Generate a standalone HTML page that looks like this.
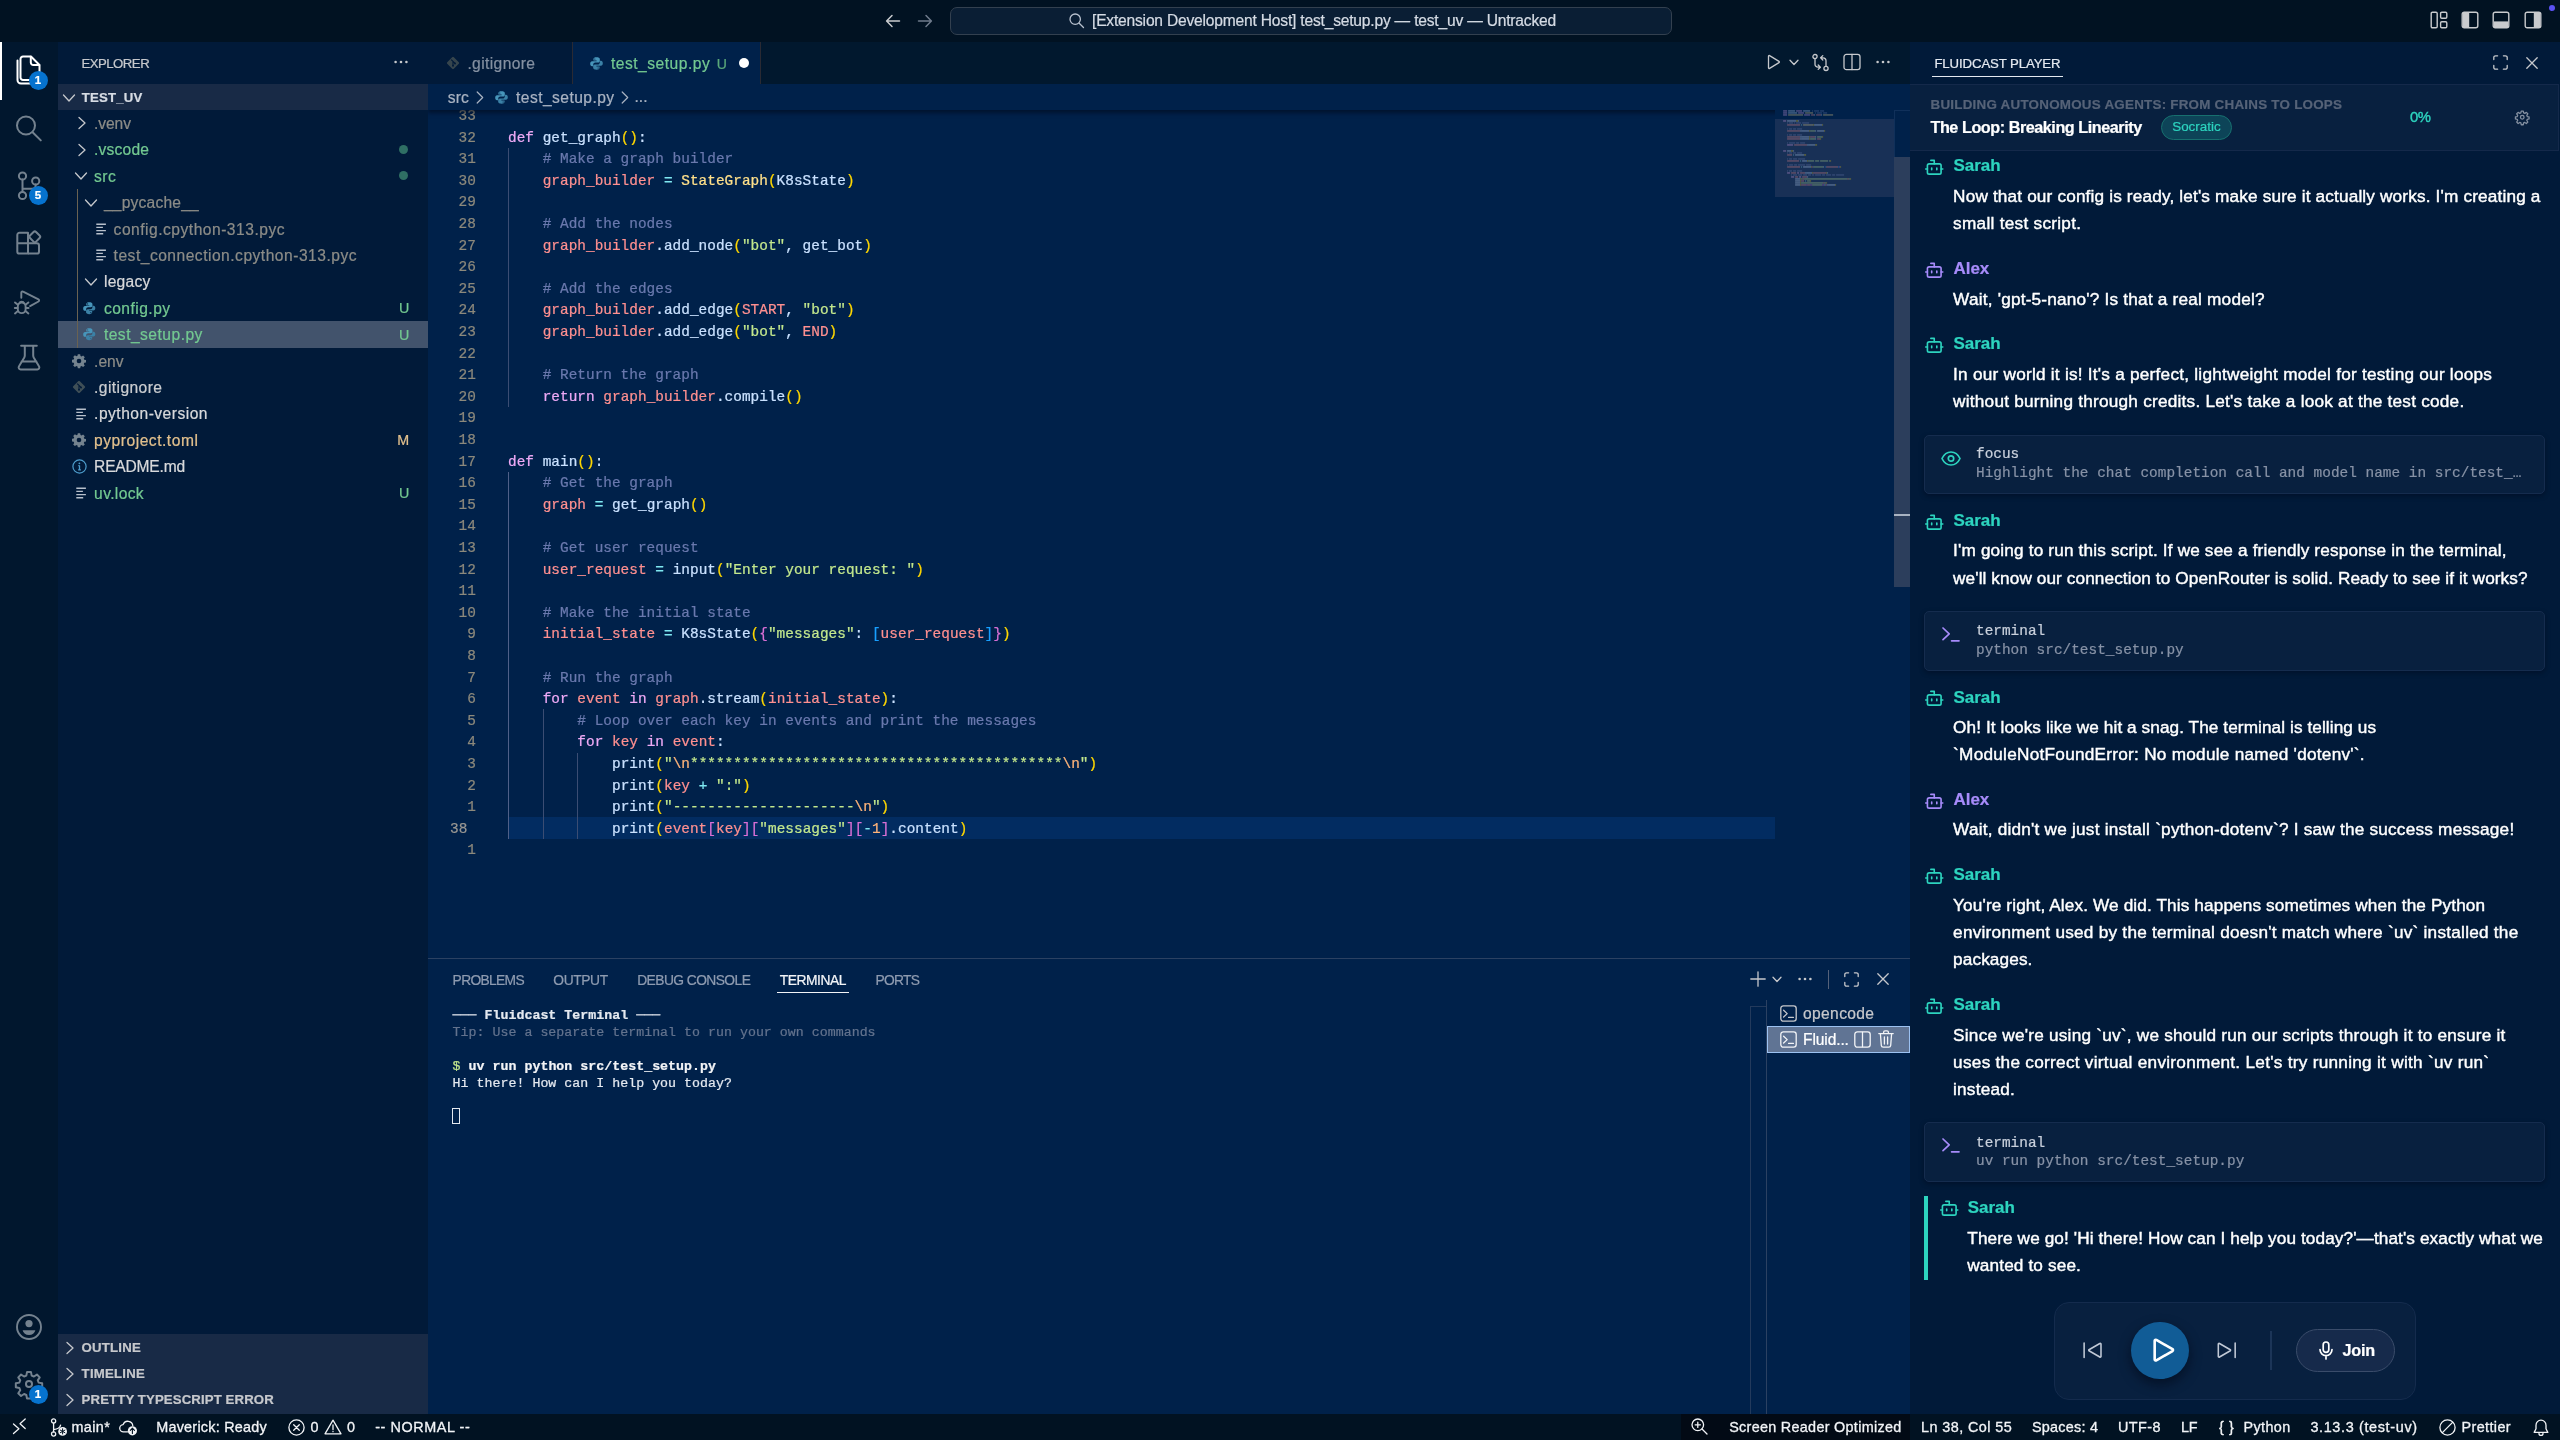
<!DOCTYPE html>
<html lang="en"><head><meta charset="utf-8"><title>test_setup.py — test_uv</title>
<style>
*{box-sizing:border-box;margin:0;padding:0}
html,body{width:2560px;height:1440px;overflow:hidden;background:#00214a}
body{font-family:"Liberation Sans",sans-serif;font-size:15.6px;color:#ccd3de;position:relative;-webkit-font-smoothing:antialiased}
.abs{position:absolute}
#titlebar,#activity,#sidebar,#editor,#panel,#aux,#status{will-change:transform}
body{-webkit-text-stroke:.22px}
#status .t{-webkit-text-stroke:.3px}
svg{display:block;overflow:visible}
.t{position:absolute;white-space:pre;line-height:1}
/* regions */
#titlebar{position:absolute;left:0;top:0;width:2560px;height:42px;background:#011222}
#activity{position:absolute;left:0;top:42px;width:58px;height:1372px;background:#01172e}
#sidebar{position:absolute;left:58px;top:42px;width:370px;height:1372px;background:#011a39}
#editor{position:absolute;left:428px;top:42px;width:1482px;height:916px;background:#00214a;overflow:hidden}
#panel{position:absolute;left:428px;top:958px;width:1482px;height:456px;background:#00214a;border-top:1px solid #2b4162;overflow:hidden}
#aux{position:absolute;left:1910px;top:42px;width:650px;height:1372px;background:#011a39;overflow:hidden}
#status{position:absolute;left:0;top:1414px;width:2560px;height:26px;background:#011222;color:#f2f4f7}
.badge{width:19px;height:19px;border-radius:50%;background:#0673cf;color:#fff;font-size:11.5px;font-weight:bold;text-align:center;line-height:19px}
.ln{font-size:14.4px;color:#8c897c;letter-spacing:.027px}
.cl{font-size:14.4px;color:#c9e1ff;letter-spacing:.027px}
.m{font-size:17.2px;color:#ffffff;-webkit-text-stroke:.42px}
.mono{font-family:"Liberation Mono",monospace}
</style></head><body>

<!-- ================= TITLE BAR ================= -->
<div id="titlebar">
  <svg class="abs" style="left:884px;top:12px" width="18" height="18" viewBox="0 0 18 18" fill="none" stroke="#c9cbce" stroke-width="1.5" stroke-linecap="round" stroke-linejoin="round"><path d="M15.5 9H3M8 3.5L2.6 9 8 14.5"></path></svg>
  <svg class="abs" style="left:916px;top:12px" width="18" height="18" viewBox="0 0 18 18" fill="none" stroke="#6f7b8c" stroke-width="1.5" stroke-linecap="round" stroke-linejoin="round"><path d="M2.5 9H15M10 3.5L15.4 9 10 14.5"></path></svg>
  <div class="abs" style="left:950px;top:7px;width:722px;height:28px;border:1px solid #33404f;border-radius:7px;background:#0a1e34"></div>
  <svg class="abs" style="left:1068px;top:12px" width="17" height="17" viewBox="0 0 17 17" fill="none" stroke="#b9c2cf" stroke-width="1.3" stroke-linecap="round"><circle cx="7.2" cy="7.2" r="5.2"></circle><path d="M11.2 11.2L15.5 15.5"></path></svg>
  <span class="t" style="left: 1092px; top: 13px; font-size: 15.6px; color: rgb(213, 219, 228); letter-spacing: -0.199px;">[Extension Development Host] test_setup.py — test_uv — Untracked</span>
  <!-- layout controls -->
  <svg class="abs" style="left:2429.500px;top:11.400px" width="18" height="18" viewBox="0 0 18 18" fill="none" stroke="#c9cbce" stroke-width="1.4"><rect x="1.2" y="1.2" width="6" height="15.6" rx="1.2"></rect><rect x="10.6" y="1.2" width="6.2" height="6" rx="1.2"></rect><rect x="10.6" y="10.8" width="6.2" height="6" rx="1.2"></rect></svg>
  <svg class="abs" style="left:2460.600px;top:11.400px" width="18" height="18" viewBox="0 0 18 18"><rect x="1.2" y="1.2" width="15.6" height="15.6" rx="2" fill="none" stroke="#c9cbce" stroke-width="1.4"></rect><path d="M2 2h6.2v14H2z" fill="#c9cbce"></path></svg>
  <svg class="abs" style="left:2492.300px;top:11.400px" width="18" height="18" viewBox="0 0 18 18"><rect x="1.2" y="1.2" width="15.6" height="15.6" rx="2" fill="none" stroke="#c9cbce" stroke-width="1.4"></rect><path d="M2 10.4h14V16H2z" fill="#c9cbce"></path></svg>
  <svg class="abs" style="left:2523.500px;top:11.400px" width="18" height="18" viewBox="0 0 18 18"><rect x="1.2" y="1.2" width="15.6" height="15.6" rx="2" fill="none" stroke="#c9cbce" stroke-width="1.4"></rect><path d="M9.8 2H16v14H9.8z" fill="#c9cbce"></path></svg>
  <div class="abs" style="left:2548.800px;top:4.900px;width:6.500px;height:6.500px;border-radius:50%;background:#5b52f2"></div>
</div>

<!-- ================= ACTIVITY BAR ================= -->
<div id="activity">
  <div class="abs" style="left:0;top:0;width:2px;height:58px;background:#ffffff"></div>
    <!-- files (active) -->
  <svg class="abs" style="left:15px;top:12px" width="27" height="32" viewBox="0 0 27 32" fill="none" stroke="#ffffff" stroke-width="2" stroke-linejoin="round" stroke-linecap="round"><path d="M8 2.500h8l8.500 8.500v12.500a2.500 2.500 0 0 1-2.500 2.500H8a2.500 2.500 0 0 1-2.500-2.500V5a2.500 2.500 0 0 1 2.500-2.500z"></path><path d="M15.800 2.800v5.700a2.500 2.500 0 0 0 2.500 2.500h5.900"></path><path d="M2.500 6.500v19.500a3.500 3.500 0 0 0 3.500 3.500h9.500"></path></svg>
  <div class="abs badge" style="left:28.5px;top:28.5px">1</div>
  <!-- search -->
  <svg class="abs" style="left:15px;top:72px" width="28" height="28" viewBox="0 0 28 28" fill="none" stroke="#74828f" stroke-width="2" stroke-linecap="round"><circle cx="11" cy="11.5" r="9"></circle><path d="M17.6 18.2l8.2 8.2"></path></svg>
  <!-- scm -->
  <svg class="abs" style="left:15px;top:128px" width="28" height="32" viewBox="0 0 28 32" fill="none" stroke="#74828f" stroke-width="2" stroke-linecap="round"><circle cx="7.5" cy="6" r="3.6"></circle><circle cx="7.5" cy="25.5" r="3.6"></circle><circle cx="20.7" cy="11" r="3.6"></circle><path d="M7.500 9.600v12.300M20.700 14.600v.600a3.500 3.500 0 0 1-3.500 3.500H7.500"></path></svg>
  <div class="abs badge" style="left:28.5px;top:144px">5</div>
  <!-- extensions -->
  <svg class="abs" style="left:15px;top:186px" width="28" height="30" viewBox="0 0 28 30" fill="none" stroke="#74828f" stroke-width="2" stroke-linejoin="round"><path d="M4.500 4.700H13v20.900H4.500a2.200 2.200 0 0 1-2.200-2.200V6.900a2.200 2.200 0 0 1 2.200-2.200z"></path><path d="M2.300 15.200h19.500a2.200 2.200 0 0 1 2.200 2.200v6a2.200 2.200 0 0 1-2.200 2.200H13"></path><rect x="15.500" y="4.500" width="8.600" height="8.600" rx="1.800" transform="rotate(45 19.800 8.800)"></rect></svg>
  <!-- run &amp; debug -->
  <svg class="abs" style="left:12px;top:246px" width="30" height="30" viewBox="0 0 30 30" fill="none" stroke="#74828f" stroke-width="1.900" stroke-linejoin="round" stroke-linecap="round"><path d="M9.300 9.800V4.600a1.200 1.200 0 0 1 1.800-1l15.400 7.800a1.200 1.200 0 0 1 0 2.100l-8.400 4.600"></path><path d="M5.800 18.400a3.900 3.900 0 0 1 7.800 0v2.800a3.900 3.900 0 0 1-7.800 0z"></path><path d="M7.400 15.300a2.400 2.400 0 0 1 4.600 0M5.600 16.600l-2.600-2.200M13.800 16.600l2.600-2.200M5.600 20H2.800M16.600 20h-2.800M5.900 23l-2.900 2.400M13.500 23l2.900 2.400"></path></svg>
  <!-- testing (flask) -->
  <svg class="abs" style="left:17px;top:302px" width="24" height="28" viewBox="0 0 24 28" fill="none" stroke="#74828f" stroke-width="2" stroke-linejoin="round" stroke-linecap="round"><path d="M4.100 1.800h15.700M7.800 2v9.500c0 1-.300 1.700-.800 2.600L2 22.300a2 2 0 0 0 1.800 3.100h16.400a2 2 0 0 0 1.800-3.100l-5-8.200c-.500-.900-.800-1.600-.800-2.600V2M4.600 17.500h14.800"></path></svg>
  <!-- account -->
  <svg class="abs" style="left:15px;top:1271px" width="28" height="28" viewBox="0 0 28 28" fill="none" stroke="#74828f" stroke-width="1.9"><circle cx="14" cy="14" r="12"></circle><circle cx="14" cy="10.6" r="3.6" fill="#74828f" stroke="none"></circle><path d="M7.6 17.2a6.6 6.2 0 0 0 12.8 0z" fill="#74828f" stroke="none"></path></svg>
  <!-- settings gear -->
  <svg class="abs" style="left:15px;top:1328px" width="28" height="28" viewBox="0 0 24 24" fill="none" stroke="#74828f" stroke-width="1.7" stroke-linejoin="round"><path d="M10.3 1.8h3.4l.6 3 1.9.8 2.6-1.7 2.4 2.4-1.7 2.6.8 1.9 3 .6v3.4l-3 .6-.8 1.9 1.7 2.6-2.4 2.4-2.6-1.7-1.9.8-.6 3h-3.4l-.6-3-1.9-.8-2.6 1.7-2.4-2.4 1.7-2.6-.8-1.9-3-.6v-3.4l3-.6.8-1.9-1.7-2.6 2.4-2.4 2.6 1.7 1.9-.8z"></path><circle cx="12" cy="12" r="2.6"></circle></svg>
  <div class="abs badge" style="left:28.5px;top:1343px">1</div>

</div>

<!-- ================= SIDEBAR ================= -->
<div id="sidebar">
<!--SIDEBAR-->
<span class="t" style="left: 23.4px; top: 15px; font-size: 13.2px; color: rgb(198, 200, 204); letter-spacing: -0.504px;">EXPLORER</span>
<svg class="abs" style="left:336.0px;top:18px" width="14" height="4" viewBox="0 0 14 4" fill="#c6c8cc"><circle cx="1.600" cy="2" r="1.300"></circle><circle cx="7" cy="2" r="1.300"></circle><circle cx="12.400" cy="2" r="1.300"></circle></svg>
<div class="abs" style="left:0;top:42px;width:370px;height:26px;background:#182a46"></div>
<svg class="abs" style="left:4.299999999999997px;top:50.5px" width="14" height="10" viewBox="0 0 14 10" fill="none" stroke="#c6c8cc" stroke-width="1.3" stroke-linecap="round" stroke-linejoin="round"><path d="M1.5 2l5.5 6 5.5-6"></path></svg>
<span class="t" style="left: 23.7px; top: 48.5px; font-size: 13.2px; font-weight: bold; color: rgb(215, 220, 228); letter-spacing: 0.206px;">TEST_UV</span>
<svg class="abs" style="left:19px;top:74.4px" width="10" height="14" viewBox="0 0 10 14" fill="none" stroke="#c6c8cc" stroke-width="1.3" stroke-linecap="round" stroke-linejoin="round"><path d="M2 1.5l6 5.5-6 5.5"></path></svg>
<span class="t" style="left: 36.1px; top: 73.9px; font-size: 15.6px; color: rgb(140, 140, 135); letter-spacing: -0.096px;">.venv</span>
<svg class="abs" style="left:19px;top:100.8px" width="10" height="14" viewBox="0 0 10 14" fill="none" stroke="#c6c8cc" stroke-width="1.3" stroke-linecap="round" stroke-linejoin="round"><path d="M2 1.5l6 5.5-6 5.5"></path></svg>
<span class="t" style="left: 36.1px; top: 100.3px; font-size: 15.6px; color: rgb(115, 201, 145); letter-spacing: 0.193px;">.vscode</span>
<div class="abs" style="left:341.0px;top:102.5px;width:9px;height:9px;border-radius:50%;background:#2f6f64"></div>
<svg class="abs" style="left:16px;top:129.2px" width="14" height="10" viewBox="0 0 14 10" fill="none" stroke="#c6c8cc" stroke-width="1.3" stroke-linecap="round" stroke-linejoin="round"><path d="M1.5 2l5.5 6 5.5-6"></path></svg>
<span class="t" style="left: 36.1px; top: 126.7px; font-size: 15.6px; color: rgb(115, 201, 145); letter-spacing: 0.434px;">src</span>
<div class="abs" style="left:341.0px;top:128.9px;width:9px;height:9px;border-radius:50%;background:#2f6f64"></div>
<svg class="abs" style="left:25.5px;top:155.6px" width="14" height="10" viewBox="0 0 14 10" fill="none" stroke="#c6c8cc" stroke-width="1.3" stroke-linecap="round" stroke-linejoin="round"><path d="M1.5 2l5.5 6 5.5-6"></path></svg>
<span class="t" style="left: 45.9px; top: 153.1px; font-size: 15.6px; color: rgb(140, 140, 135); letter-spacing: 0.211px;">__pycache__</span>
<svg class="abs" style="left:37.5px;top:181.0px" width="12" height="12" viewBox="0 0 12 12" fill="none" stroke="#b8c0cc" stroke-width="1.4"><path d="M0.300 1.200h9.600M0.300 4.400h6.600M0.300 7.600h9.600M0.300 10.800h6.900"></path></svg>
<span class="t" style="left: 55.6px; top: 179.5px; font-size: 15.6px; color: rgb(140, 140, 135); letter-spacing: 0.501px;">config.cpython-313.pyc</span>
<svg class="abs" style="left:37.5px;top:207.4px" width="12" height="12" viewBox="0 0 12 12" fill="none" stroke="#b8c0cc" stroke-width="1.4"><path d="M0.300 1.200h9.600M0.300 4.400h6.600M0.300 7.600h9.600M0.300 10.800h6.900"></path></svg>
<span class="t" style="left: 55.6px; top: 205.9px; font-size: 15.6px; color: rgb(140, 140, 135); letter-spacing: 0.497px;">test_connection.cpython-313.pyc</span>
<svg class="abs" style="left:25.5px;top:234.8px" width="14" height="10" viewBox="0 0 14 10" fill="none" stroke="#c6c8cc" stroke-width="1.3" stroke-linecap="round" stroke-linejoin="round"><path d="M1.5 2l5.5 6 5.5-6"></path></svg>
<span class="t" style="left: 45.9px; top: 232.3px; font-size: 15.6px; color: rgb(216, 217, 219); letter-spacing: 0.287px;">legacy</span>
<svg class="abs" style="left:24.5px;top:259.9px" width="12.500" height="12.500" viewBox="0 0 14 14"><path d="M6.9.4C4.9.4 3.7 1 3.7 2.4v1.5h3.4v.6H2.3C.9 4.5.2 5.6.2 7.2s.7 2.7 2 2.7h1.3V8.1c0-1.2 1-2.2 2.3-2.2h3c1 0 1.8-.8 1.8-1.9V2.4C10.600 1.100 9.200 .400 6.900 .400zM5.200 1.500a.600 .600 0 1 1 0 1.300.600 .600 0 0 1 0-1.300z" fill="#4795ba"></path><path d="M7.100 13.600c2 0 3.200-.600 3.200-2V10.100H6.900v-.6h4.800c1.400 0 2.100-1.100 2.100-2.700s-.7-2.700-2-2.700h-1.300v1.800c0 1.200-1 2.200-2.300 2.200h-3c-1 0-1.800.8-1.800 1.900v1.600c0 1.300 1.400 2 3.700 2zm1.700-1.100a.600 .600 0 1 1 0-1.300.600 .600 0 0 1 0 1.300z" fill="#3b81a6"></path></svg>
<span class="t" style="left: 45.9px; top: 258.7px; font-size: 15.6px; color: rgb(115, 201, 145); letter-spacing: 0.475px;">config.py</span>
<span class="t" style="left:341.0px;top:259.3px;font-size:14.300px;color:#73c991">U</span>
<div class="abs" style="left:0;top:279.4px;width:370px;height:26.400px;background:#42536c"></div>
<svg class="abs" style="left:24.5px;top:286.3px" width="12.500" height="12.500" viewBox="0 0 14 14"><path d="M6.9.4C4.9.4 3.7 1 3.7 2.4v1.5h3.4v.6H2.3C.9 4.5.2 5.6.2 7.2s.7 2.7 2 2.7h1.3V8.1c0-1.2 1-2.2 2.3-2.2h3c1 0 1.8-.8 1.8-1.9V2.4C10.600 1.100 9.200 .400 6.900 .400zM5.200 1.500a.600 .600 0 1 1 0 1.300.600 .600 0 0 1 0-1.300z" fill="#4795ba"></path><path d="M7.100 13.600c2 0 3.200-.600 3.200-2V10.100H6.900v-.6h4.800c1.400 0 2.100-1.100 2.100-2.700s-.7-2.700-2-2.700h-1.300v1.800c0 1.200-1 2.200-2.300 2.200h-3c-1 0-1.800.8-1.800 1.900v1.600c0 1.300 1.400 2 3.700 2zm1.700-1.100a.600 .600 0 1 1 0-1.300.600 .600 0 0 1 0 1.300z" fill="#3b81a6"></path></svg>
<span class="t" style="left: 45.9px; top: 285.1px; font-size: 15.6px; color: rgb(115, 201, 145); letter-spacing: 0.48px;">test_setup.py</span>
<span class="t" style="left:341.0px;top:285.7px;font-size:14.300px;color:#73c991">U</span>
<svg class="abs" style="left:14.4px;top:312.0px" width="14" height="14" viewBox="0 0 14 14"><path d="M5.800 .300h2.400l.3 1.700 1.100.5 1.500-1 1.700 1.700-1 1.500.5 1.100 1.700.3v2.400l-1.700.3-.5 1.100 1 1.500-1.700 1.700-1.500-1-1.100.5-.3 1.700H5.800l-.3-1.700-1.100-.5-1.500 1-1.700-1.700 1-1.500-.5-1.100-1.700-.3V5.800l1.700-.3.5-1.100-1-1.500 1.700-1.700 1.500 1 1.100-.5z" fill="#74838f"></path><circle cx="7" cy="7" r="2.300" fill="#011a39"></circle></svg>
<span class="t" style="left: 36.1px; top: 311.5px; font-size: 15.6px; color: rgb(140, 140, 135); letter-spacing: -0.046px;">.env</span>
<svg class="abs" style="left:14.4px;top:338.4px" width="14" height="14" viewBox="0 0 14 14"><rect x="2.300" y="2.300" width="9.400" height="9.400" rx="1.200" transform="rotate(45 7 7)" fill="#3f4f57"></rect><path d="M5.200 3.600l3.600 3.600M7 5.400v4.400" stroke="#011a39" stroke-width="1.100" fill="none"></path><circle cx="7" cy="9.800" r="1" fill="#011a39"></circle><circle cx="9" cy="7.400" r="1" fill="#011a39"></circle></svg>
<span class="t" style="left: 36.1px; top: 337.9px; font-size: 15.6px; color: rgb(203, 205, 208); letter-spacing: 0.414px;">.gitignore</span>
<svg class="abs" style="left:18px;top:365.8px" width="12" height="12" viewBox="0 0 12 12" fill="none" stroke="#b8c0cc" stroke-width="1.4"><path d="M0.300 1.200h9.600M0.300 4.400h6.600M0.300 7.600h9.600M0.300 10.800h6.900"></path></svg>
<span class="t" style="left: 36.1px; top: 364.3px; font-size: 15.6px; color: rgb(216, 217, 219); letter-spacing: 0.485px;">.python-version</span>
<svg class="abs" style="left:14.4px;top:391.2px" width="14" height="14" viewBox="0 0 14 14"><path d="M5.800 .300h2.400l.3 1.700 1.100.5 1.500-1 1.700 1.700-1 1.500.5 1.100 1.700.3v2.400l-1.700.3-.5 1.100 1 1.500-1.700 1.700-1.500-1-1.100.5-.3 1.700H5.800l-.3-1.700-1.100-.5-1.500 1-1.700-1.700 1-1.500-.5-1.100-1.700-.3V5.800l1.700-.3.5-1.100-1-1.500 1.700-1.700 1.500 1 1.100-.5z" fill="#74838f"></path><circle cx="7" cy="7" r="2.300" fill="#011a39"></circle></svg>
<span class="t" style="left: 36.1px; top: 390.7px; font-size: 15.6px; color: rgb(226, 192, 141); letter-spacing: 0.516px;">pyproject.toml</span>
<span class="t" style="left:339.2px;top:391.3px;font-size:14.300px;color:#e2c08d">M</span>
<svg class="abs" style="left:13.5px;top:417.1px" width="15" height="15" viewBox="0 0 15 15" fill="none" stroke="#4d9ccb" stroke-width="1.200"><circle cx="7.500" cy="7.500" r="6.600"></circle><path d="M7.500 6.600v4.200M6.300 6.600h1.200M6.100 10.900h2.800" stroke-width="1.300"></path><circle cx="7.400" cy="4.300" r=".9" fill="#4d9ccb" stroke="none"></circle></svg>
<span class="t" style="left: 36.1px; top: 417.1px; font-size: 15.6px; color: rgb(216, 217, 219); letter-spacing: -0.213px;">README.md</span>
<svg class="abs" style="left:18px;top:445.0px" width="12" height="12" viewBox="0 0 12 12" fill="none" stroke="#b8c0cc" stroke-width="1.4"><path d="M0.300 1.200h9.600M0.300 4.400h6.600M0.300 7.600h9.600M0.300 10.800h6.900"></path></svg>
<span class="t" style="left: 36.1px; top: 443.5px; font-size: 15.6px; color: rgb(115, 201, 145); letter-spacing: 0.361px;">uv.lock</span>
<span class="t" style="left:341.0px;top:444.1px;font-size:14.300px;color:#73c991">U</span>
<div class="abs" style="left:18.6px;top:147.4px;width:1px;height:158.4px;background:#6a6252"></div>
<div class="abs" style="left:0;top:1292px;width:370px;height:80px;background:#182a46"></div>
<svg class="abs" style="left:7px;top:1298.5px" width="10" height="14" viewBox="0 0 10 14" fill="none" stroke="#c6c8cc" stroke-width="1.3" stroke-linecap="round" stroke-linejoin="round"><path d="M2 1.5l6 5.5-6 5.5"></path></svg>
<span class="t" style="left: 23.6px; top: 1298.7px; font-size: 13.2px; font-weight: bold; color: rgb(198, 200, 204); letter-spacing: 0.216px;">OUTLINE</span>
<svg class="abs" style="left:7px;top:1325px" width="10" height="14" viewBox="0 0 10 14" fill="none" stroke="#c6c8cc" stroke-width="1.3" stroke-linecap="round" stroke-linejoin="round"><path d="M2 1.5l6 5.5-6 5.5"></path></svg>
<span class="t" style="left: 23.6px; top: 1325.2px; font-size: 13.2px; font-weight: bold; color: rgb(198, 200, 204); letter-spacing: 0.232px;">TIMELINE</span>
<svg class="abs" style="left:7px;top:1351px" width="10" height="14" viewBox="0 0 10 14" fill="none" stroke="#c6c8cc" stroke-width="1.3" stroke-linecap="round" stroke-linejoin="round"><path d="M2 1.5l6 5.5-6 5.5"></path></svg>
<span class="t" style="left: 23.6px; top: 1351.2px; font-size: 13.2px; font-weight: bold; color: rgb(198, 200, 204); letter-spacing: 0.115px;">PRETTY TYPESCRIPT ERROR</span>
</div>

<!-- ================= EDITOR ================= -->
<div id="editor">
<!--EDITOR-->
<div class="abs" style="left:0;top:0;width:1482px;height:42px;background:#01182e"></div>
<div class="abs" style="left:0;top:0;width:144px;height:42px;background:#011a39"></div>
<div class="abs" style="left:144px;top:0;width:189px;height:42px;background:#00214a;border-left:1px solid #2a2a33;border-right:1px solid #2a2a33"></div>
<svg class="abs" style="left:17.500px;top:14px" width="14" height="14" viewBox="0 0 14 14"><rect x="2.300" y="2.300" width="9.400" height="9.400" rx="1.200" transform="rotate(45 7 7)" fill="#36454d"></rect><path d="M5.200 3.600l3.600 3.600M7 5.400v4.400" stroke="#011a39" stroke-width="1.100" fill="none"></path><circle cx="7" cy="9.800" r="1" fill="#011a39"></circle><circle cx="9" cy="7.400" r="1" fill="#011a39"></circle></svg>
<span class="t" style="left: 39.4px; top: 13.7px; font-size: 15.6px; color: rgb(132, 144, 161); letter-spacing: 0.384px;">.gitignore</span>
<svg class="abs" style="left:162px;top:14.5px" width="13" height="13" viewBox="0 0 14 14"><path d="M6.9.4C4.9.4 3.7 1 3.7 2.4v1.500h3.400v.600H2.300C.900 4.500.200 5.600.200 7.200s.700 2.700 2 2.700h1.300V8.100c0-1.200 1-2.200 2.300-2.200h3c1 0 1.800-.800 1.800-1.900V2.400C10.600 1.100 9.200.400 6.900.400zM5.200 1.500a.6.6 0 1 1 0 1.300.6.6 0 0 1 0-1.300z" fill="#4795ba"></path><path d="M7.100 13.600c2 0 3.200-.600 3.200-2V10.100H6.900v-.600h4.800c1.400 0 2.100-1.100 2.100-2.700s-.700-2.700-2-2.700h-1.300v1.800c0 1.200-1 2.200-2.300 2.200h-3c-1 0-1.800.800-1.800 1.900v1.600c0 1.300 1.400 2 3.700 2zm1.700-1.100a.6.6 0 1 1 0-1.300.6.6 0 0 1 0 1.300z" fill="#3b81a6"></path></svg>
<span class="t" style="left: 182.9px; top: 13.7px; font-size: 15.6px; color: rgb(115, 201, 145); letter-spacing: 0.51px;">test_setup.py</span>
<span class="t" style="left:288.700px;top:14.700px;font-size:14px;color:#5aa97a">U</span>
<div class="abs" style="left:310.700px;top:16px;width:10px;height:10px;border-radius:50%;background:#ffffff"></div>
<svg class="abs" style="left:1338px;top:11.800px" width="16" height="16" viewBox="0 0 16 16" stroke="#c6c8cc" fill="none" stroke-width="1.300" stroke-linecap="round" stroke-linejoin="round"><path d="M2.500 2.200v11.600a.700.700 0 0 0 1.100.600l9.400-5.800a.700.700 0 0 0 0-1.200L3.600 1.600a.700.700 0 0 0-1.100.600z"></path></svg>
<svg class="abs" style="left:1360.500px;top:16.800px" width="10" height="7" viewBox="0 0 10 7" stroke="#c6c8cc" fill="none" stroke-width="1.300" stroke-linecap="round" stroke-linejoin="round"><path d="M1 1.200l4 4.300 4-4.300"></path></svg>
<svg class="abs" style="left:1383px;top:10.800px" width="19" height="19" viewBox="0 0 19 19" stroke="#c6c8cc" fill="none" stroke-width="1.300" stroke-linecap="round" stroke-linejoin="round"><circle cx="4" cy="3.600" r="2.100"></circle><circle cx="15" cy="15.400" r="2.100"></circle><path d="M4 5.700v5.500a3 3 0 0 0 3 3h2.200M7.200 12l2.200 2.200-2.200 2.200M15 13.300V7.800a3 3 0 0 0-3-3H9.800M11.800 7l-2.200-2.200 2.200-2.200"></path></svg>
<svg class="abs" style="left:1415px;top:11.300px" width="18" height="18" viewBox="0 0 18 18" stroke="#c6c8cc" fill="none" stroke-width="1.300" stroke-linecap="round" stroke-linejoin="round"><rect x="1" y="1.400" width="16" height="15.200" rx="2.400"></rect><path d="M9 1.400v15.200"></path></svg>
<svg class="abs" style="left:1447.500px;top:18.400px" width="14" height="4" viewBox="0 0 14 4" fill="#c6c8cc"><circle cx="1.600" cy="2" r="1.300"></circle><circle cx="7" cy="2" r="1.300"></circle><circle cx="12.400" cy="2" r="1.300"></circle></svg>
<div class="abs" id="code" style="left:0;top:68px;width:1482px;height:848px;overflow:hidden">
<div class="abs" style="left:80px;top:707.4px;width:1267px;height:22px;background:#022c61"></div>
<div class="abs" style="left:80.0px;top:37.8px;width:1px;height:259.2px;background:#3b4d73"></div>
<div class="abs" style="left:80.0px;top:361.8px;width:1px;height:367.2px;background:#4f6088"></div>
<div class="abs" style="left:115.0px;top:599.4px;width:1px;height:129.6px;background:#3b4d73"></div>
<div class="abs" style="left:149.0px;top:642.6px;width:1px;height:86.4px;background:#3b4d73"></div>
<span class="t mono ln" style="right:1434.2px;top:-1.0px">33</span>
<span class="t mono ln" style="right:1434.2px;top:20.6px">32</span>
<span class="t mono cl" style="left:80px;top:20.6px"><span style="color:#eeaaf6">def</span> <span style="color:#c9e1ff">get_graph</span><span style="color:#ffd700">()</span>:</span>
<span class="t mono ln" style="right:1434.2px;top:42.2px">31</span>
<span class="t mono cl" style="left:80px;top:42.2px">    <span style="color:#6a79ae"># Make a graph builder</span></span>
<span class="t mono ln" style="right:1434.2px;top:63.8px">30</span>
<span class="t mono cl" style="left:80px;top:63.8px">    <span style="color:#ff9090">graph_builder</span> <span style="color:#7fe8f2">=</span> <span style="color:#ffe08a">StateGraph</span><span style="color:#ffd700">(</span><span style="color:#c9e1ff">K8sState</span><span style="color:#ffd700">)</span></span>
<span class="t mono ln" style="right:1434.2px;top:85.4px">29</span>
<span class="t mono ln" style="right:1434.2px;top:107.0px">28</span>
<span class="t mono cl" style="left:80px;top:107.0px">    <span style="color:#6a79ae"># Add the nodes</span></span>
<span class="t mono ln" style="right:1434.2px;top:128.6px">27</span>
<span class="t mono cl" style="left:80px;top:128.6px">    <span style="color:#ff9090">graph_builder</span>.<span style="color:#c9e1ff">add_node</span><span style="color:#ffd700">(</span><span style="color:#c3e88d">"bot"</span>, <span style="color:#c9e1ff">get_bot</span><span style="color:#ffd700">)</span></span>
<span class="t mono ln" style="right:1434.2px;top:150.2px">26</span>
<span class="t mono ln" style="right:1434.2px;top:171.8px">25</span>
<span class="t mono cl" style="left:80px;top:171.8px">    <span style="color:#6a79ae"># Add the edges</span></span>
<span class="t mono ln" style="right:1434.2px;top:193.4px">24</span>
<span class="t mono cl" style="left:80px;top:193.4px">    <span style="color:#ff9090">graph_builder</span>.<span style="color:#c9e1ff">add_edge</span><span style="color:#ffd700">(</span><span style="color:#ff9090">START</span>, <span style="color:#c3e88d">"bot"</span><span style="color:#ffd700">)</span></span>
<span class="t mono ln" style="right:1434.2px;top:215.0px">23</span>
<span class="t mono cl" style="left:80px;top:215.0px">    <span style="color:#ff9090">graph_builder</span>.<span style="color:#c9e1ff">add_edge</span><span style="color:#ffd700">(</span><span style="color:#c3e88d">"bot"</span>, <span style="color:#ff9090">END</span><span style="color:#ffd700">)</span></span>
<span class="t mono ln" style="right:1434.2px;top:236.6px">22</span>
<span class="t mono ln" style="right:1434.2px;top:258.2px">21</span>
<span class="t mono cl" style="left:80px;top:258.2px">    <span style="color:#6a79ae"># Return the graph</span></span>
<span class="t mono ln" style="right:1434.2px;top:279.8px">20</span>
<span class="t mono cl" style="left:80px;top:279.8px">    <span style="color:#eeaaf6">return</span> <span style="color:#ff9090">graph_builder</span>.<span style="color:#c9e1ff">compile</span><span style="color:#ffd700">()</span></span>
<span class="t mono ln" style="right:1434.2px;top:301.4px">19</span>
<span class="t mono ln" style="right:1434.2px;top:323.0px">18</span>
<span class="t mono ln" style="right:1434.2px;top:344.6px">17</span>
<span class="t mono cl" style="left:80px;top:344.6px"><span style="color:#eeaaf6">def</span> <span style="color:#c9e1ff">main</span><span style="color:#ffd700">()</span>:</span>
<span class="t mono ln" style="right:1434.2px;top:366.2px">16</span>
<span class="t mono cl" style="left:80px;top:366.2px">    <span style="color:#6a79ae"># Get the graph</span></span>
<span class="t mono ln" style="right:1434.2px;top:387.8px">15</span>
<span class="t mono cl" style="left:80px;top:387.8px">    <span style="color:#ff9090">graph</span> <span style="color:#7fe8f2">=</span> <span style="color:#c9e1ff">get_graph</span><span style="color:#ffd700">()</span></span>
<span class="t mono ln" style="right:1434.2px;top:409.4px">14</span>
<span class="t mono ln" style="right:1434.2px;top:431.0px">13</span>
<span class="t mono cl" style="left:80px;top:431.0px">    <span style="color:#6a79ae"># Get user request</span></span>
<span class="t mono ln" style="right:1434.2px;top:452.6px">12</span>
<span class="t mono cl" style="left:80px;top:452.6px">    <span style="color:#ff9090">user_request</span> <span style="color:#7fe8f2">=</span> <span style="color:#c9e1ff">input</span><span style="color:#ffd700">(</span><span style="color:#c3e88d">"Enter your request: "</span><span style="color:#ffd700">)</span></span>
<span class="t mono ln" style="right:1434.2px;top:474.2px">11</span>
<span class="t mono ln" style="right:1434.2px;top:495.8px">10</span>
<span class="t mono cl" style="left:80px;top:495.8px">    <span style="color:#6a79ae"># Make the initial state</span></span>
<span class="t mono ln" style="right:1434.2px;top:517.4px">9</span>
<span class="t mono cl" style="left:80px;top:517.4px">    <span style="color:#ff9090">initial_state</span> <span style="color:#7fe8f2">=</span> <span style="color:#c9e1ff">K8sState</span><span style="color:#ffd700">(</span><span style="color:#da70d6">{</span><span style="color:#c3e88d">"messages"</span>: <span style="color:#179fff">[</span><span style="color:#ff9090">user_request</span><span style="color:#179fff">]</span><span style="color:#da70d6">}</span><span style="color:#ffd700">)</span></span>
<span class="t mono ln" style="right:1434.2px;top:539.0px">8</span>
<span class="t mono ln" style="right:1434.2px;top:560.6px">7</span>
<span class="t mono cl" style="left:80px;top:560.6px">    <span style="color:#6a79ae"># Run the graph</span></span>
<span class="t mono ln" style="right:1434.2px;top:582.2px">6</span>
<span class="t mono cl" style="left:80px;top:582.2px">    <span style="color:#eeaaf6">for</span> <span style="color:#ff9090">event</span> <span style="color:#eeaaf6">in</span> <span style="color:#ff9090">graph</span>.<span style="color:#c9e1ff">stream</span><span style="color:#ffd700">(</span><span style="color:#ff9090">initial_state</span><span style="color:#ffd700">)</span>:</span>
<span class="t mono ln" style="right:1434.2px;top:603.8px">5</span>
<span class="t mono cl" style="left:80px;top:603.8px">        <span style="color:#6a79ae"># Loop over each key in events and print the messages</span></span>
<span class="t mono ln" style="right:1434.2px;top:625.4px">4</span>
<span class="t mono cl" style="left:80px;top:625.4px">        <span style="color:#eeaaf6">for</span> <span style="color:#ff9090">key</span> <span style="color:#eeaaf6">in</span> <span style="color:#ff9090">event</span>:</span>
<span class="t mono ln" style="right:1434.2px;top:647.0px">3</span>
<span class="t mono cl" style="left:80px;top:647.0px">            <span style="color:#c9e1ff">print</span><span style="color:#ffd700">(</span><span style="color:#c3e88d">"</span><span style="color:#ffb47a">\n</span><span style="color:#c3e88d">*******************************************</span><span style="color:#ffb47a">\n</span><span style="color:#c3e88d">"</span><span style="color:#ffd700">)</span></span>
<span class="t mono ln" style="right:1434.2px;top:668.6px">2</span>
<span class="t mono cl" style="left:80px;top:668.6px">            <span style="color:#c9e1ff">print</span><span style="color:#ffd700">(</span><span style="color:#ff9090">key</span> <span style="color:#7fe8f2">+</span> <span style="color:#c3e88d">":"</span><span style="color:#ffd700">)</span></span>
<span class="t mono ln" style="right:1434.2px;top:690.2px">1</span>
<span class="t mono cl" style="left:80px;top:690.2px">            <span style="color:#c9e1ff">print</span><span style="color:#ffd700">(</span><span style="color:#c3e88d">"---------------------</span><span style="color:#ffb47a">\n</span><span style="color:#c3e88d">"</span><span style="color:#ffd700">)</span></span>
<span class="t mono ln" style="left:22px;top:711.8px;color:#9a9893">38</span>
<span class="t mono cl" style="left:80px;top:711.8px">            <span style="color:#c9e1ff">print</span><span style="color:#ffd700">(</span><span style="color:#ff9090">event</span><span style="color:#da70d6">[</span><span style="color:#ff9090">key</span><span style="color:#da70d6">]</span><span style="color:#da70d6">[</span><span style="color:#c3e88d">"messages"</span><span style="color:#da70d6">]</span><span style="color:#da70d6">[</span><span style="color:#7fe8f2">-</span><span style="color:#ffb47a">1</span><span style="color:#da70d6">]</span>.<span style="color:#c9e1ff">content</span><span style="color:#ffd700">)</span></span>
<span class="t mono ln" style="right:1434.2px;top:733.4px">1</span>
</div>
<div class="abs" style="left:0;top:42px;width:1482px;height:26px;background:#00214a;box-shadow:0 3px 4px rgba(0,8,24,.55);clip-path:inset(0 135px -10px 0)"></div>
<span class="t" style="left: 19.7px; top: 47.5px; font-size: 15.6px; color: rgb(169, 179, 194); letter-spacing: 0.168px;">src</span>
<svg class="abs" style="left:48.0px;top:49px" width="8" height="13" viewBox="0 0 8 13" fill="none" stroke="#a9b3c2" stroke-width="1.200" stroke-linecap="round" stroke-linejoin="round"><path d="M1.200 1l5.500 5.500-5.500 5.500"></path></svg>
<svg class="abs" style="left:67px;top:48.5px" width="13" height="13" viewBox="0 0 14 14"><path d="M6.9.4C4.9.4 3.7 1 3.7 2.4v1.500h3.400v.600H2.300C.900 4.500.200 5.600.200 7.200s.700 2.700 2 2.700h1.300V8.100c0-1.200 1-2.200 2.300-2.200h3c1 0 1.800-.800 1.800-1.900V2.400C10.600 1.100 9.200.400 6.900.400zM5.200 1.500a.6.6 0 1 1 0 1.300.6.6 0 0 1 0-1.300z" fill="#4795ba"></path><path d="M7.100 13.600c2 0 3.200-.600 3.200-2V10.100H6.900v-.600h4.800c1.400 0 2.100-1.100 2.100-2.700s-.700-2.700-2-2.700h-1.300v1.800c0 1.200-1 2.200-2.300 2.200h-3c-1 0-1.800.800-1.800 1.900v1.600c0 1.300 1.400 2 3.700 2zm1.700-1.100a.6.6 0 1 1 0-1.300.6.6 0 0 1 0 1.300z" fill="#3b81a6"></path></svg>
<span class="t" style="left: 88px; top: 47.5px; font-size: 15.6px; color: rgb(169, 179, 194); letter-spacing: 0.449px;">test_setup.py</span>
<svg class="abs" style="left:193.0px;top:49px" width="8" height="13" viewBox="0 0 8 13" fill="none" stroke="#a9b3c2" stroke-width="1.200" stroke-linecap="round" stroke-linejoin="round"><path d="M1.200 1l5.500 5.500-5.500 5.500"></path></svg>
<span class="t" style="left:206.500px;top:46.500px;font-size:15.600px;color:#a9b3c2">...</span>
<div class="abs" style="left:1347px;top:77px;width:119px;height:78px;background:#183056"></div>
<svg class="abs" style="left:0;top:0;opacity:.36" width="1482" height="200"><rect x="1355.1" y="68.3" width="4.0" height="1.3" fill="#eeaaf6"></rect><rect x="1360.1" y="68.3" width="7.0" height="1.3" fill="#c9e1ff"></rect><rect x="1368.1" y="68.3" width="6.0" height="1.3" fill="#eeaaf6"></rect><rect x="1375.1" y="68.3" width="7.0" height="1.3" fill="#c9e1ff"></rect><rect x="1384.1" y="68.3" width="1.0" height="1.3" fill="#6a79ae"></rect><rect x="1386.1" y="68.3" width="5.0" height="1.3" fill="#6a79ae"></rect><rect x="1392.1" y="68.3" width="4.0" height="1.3" fill="#6a79ae"></rect><rect x="1355.1" y="70.3" width="4.0" height="1.3" fill="#eeaaf6"></rect><rect x="1360.1" y="70.3" width="9.0" height="1.3" fill="#c9e1ff"></rect><rect x="1370.1" y="70.3" width="6.0" height="1.3" fill="#eeaaf6"></rect><rect x="1377.1" y="70.3" width="8.0" height="1.3" fill="#ffe08a"></rect><rect x="1387.1" y="70.3" width="1.0" height="1.3" fill="#6a79ae"></rect><rect x="1389.1" y="70.3" width="5.0" height="1.3" fill="#6a79ae"></rect><rect x="1395.1" y="70.3" width="4.0" height="1.3" fill="#6a79ae"></rect><rect x="1355.1" y="72.3" width="4.0" height="1.3" fill="#eeaaf6"></rect><rect x="1360.1" y="72.3" width="15.0" height="1.3" fill="#ffe08a"></rect><rect x="1376.1" y="72.3" width="6.0" height="1.3" fill="#eeaaf6"></rect><rect x="1383.1" y="72.3" width="3.0" height="1.3" fill="#ff9090"></rect><rect x="1386.1" y="72.3" width="1.0" height="1.3" fill="#c9e1ff"></rect><rect x="1388.1" y="72.3" width="5.0" height="1.3" fill="#ff9090"></rect><rect x="1393.1" y="72.3" width="1.0" height="1.3" fill="#c9e1ff"></rect><rect x="1395.1" y="72.3" width="10.0" height="1.3" fill="#ffe08a"></rect><rect x="1355.1" y="78.3" width="3.0" height="1.3" fill="#eeaaf6"></rect><rect x="1359.1" y="78.3" width="9.0" height="1.3" fill="#c9e1ff"></rect><rect x="1368.1" y="78.3" width="2.0" height="1.3" fill="#ffd700"></rect><rect x="1370.1" y="78.3" width="1.0" height="1.3" fill="#c9e1ff"></rect><rect x="1359.1" y="80.3" width="1.0" height="1.3" fill="#6a79ae"></rect><rect x="1361.1" y="80.3" width="4.0" height="1.3" fill="#6a79ae"></rect><rect x="1366.1" y="80.3" width="1.0" height="1.3" fill="#6a79ae"></rect><rect x="1368.1" y="80.3" width="5.0" height="1.3" fill="#6a79ae"></rect><rect x="1374.1" y="80.3" width="7.0" height="1.3" fill="#6a79ae"></rect><rect x="1359.1" y="82.3" width="13.0" height="1.3" fill="#ff9090"></rect><rect x="1373.1" y="82.3" width="1.0" height="1.3" fill="#7fe8f2"></rect><rect x="1375.1" y="82.3" width="10.0" height="1.3" fill="#ffe08a"></rect><rect x="1385.1" y="82.3" width="1.0" height="1.3" fill="#ffd700"></rect><rect x="1386.1" y="82.3" width="8.0" height="1.3" fill="#c9e1ff"></rect><rect x="1394.1" y="82.3" width="1.0" height="1.3" fill="#ffd700"></rect><rect x="1359.1" y="86.3" width="1.0" height="1.3" fill="#6a79ae"></rect><rect x="1361.1" y="86.3" width="3.0" height="1.3" fill="#6a79ae"></rect><rect x="1365.1" y="86.3" width="3.0" height="1.3" fill="#6a79ae"></rect><rect x="1369.1" y="86.3" width="5.0" height="1.3" fill="#6a79ae"></rect><rect x="1359.1" y="88.3" width="13.0" height="1.3" fill="#ff9090"></rect><rect x="1372.1" y="88.3" width="1.0" height="1.3" fill="#c9e1ff"></rect><rect x="1373.1" y="88.3" width="8.0" height="1.3" fill="#c9e1ff"></rect><rect x="1381.1" y="88.3" width="1.0" height="1.3" fill="#ffd700"></rect><rect x="1382.1" y="88.3" width="5.0" height="1.3" fill="#c3e88d"></rect><rect x="1387.1" y="88.3" width="1.0" height="1.3" fill="#c9e1ff"></rect><rect x="1389.1" y="88.3" width="7.0" height="1.3" fill="#c9e1ff"></rect><rect x="1396.1" y="88.3" width="1.0" height="1.3" fill="#ffd700"></rect><rect x="1359.1" y="92.3" width="1.0" height="1.3" fill="#6a79ae"></rect><rect x="1361.1" y="92.3" width="3.0" height="1.3" fill="#6a79ae"></rect><rect x="1365.1" y="92.3" width="3.0" height="1.3" fill="#6a79ae"></rect><rect x="1369.1" y="92.3" width="5.0" height="1.3" fill="#6a79ae"></rect><rect x="1359.1" y="94.3" width="13.0" height="1.3" fill="#ff9090"></rect><rect x="1372.1" y="94.3" width="1.0" height="1.3" fill="#c9e1ff"></rect><rect x="1373.1" y="94.3" width="8.0" height="1.3" fill="#c9e1ff"></rect><rect x="1381.1" y="94.3" width="1.0" height="1.3" fill="#ffd700"></rect><rect x="1382.1" y="94.3" width="5.0" height="1.3" fill="#ff9090"></rect><rect x="1387.1" y="94.3" width="1.0" height="1.3" fill="#c9e1ff"></rect><rect x="1389.1" y="94.3" width="5.0" height="1.3" fill="#c3e88d"></rect><rect x="1394.1" y="94.3" width="1.0" height="1.3" fill="#ffd700"></rect><rect x="1359.1" y="96.3" width="13.0" height="1.3" fill="#ff9090"></rect><rect x="1372.1" y="96.3" width="1.0" height="1.3" fill="#c9e1ff"></rect><rect x="1373.1" y="96.3" width="8.0" height="1.3" fill="#c9e1ff"></rect><rect x="1381.1" y="96.3" width="1.0" height="1.3" fill="#ffd700"></rect><rect x="1382.1" y="96.3" width="5.0" height="1.3" fill="#c3e88d"></rect><rect x="1387.1" y="96.3" width="1.0" height="1.3" fill="#c9e1ff"></rect><rect x="1389.1" y="96.3" width="3.0" height="1.3" fill="#ff9090"></rect><rect x="1392.1" y="96.3" width="1.0" height="1.3" fill="#ffd700"></rect><rect x="1359.1" y="100.3" width="1.0" height="1.3" fill="#6a79ae"></rect><rect x="1361.1" y="100.3" width="6.0" height="1.3" fill="#6a79ae"></rect><rect x="1368.1" y="100.3" width="3.0" height="1.3" fill="#6a79ae"></rect><rect x="1372.1" y="100.3" width="5.0" height="1.3" fill="#6a79ae"></rect><rect x="1359.1" y="102.3" width="6.0" height="1.3" fill="#eeaaf6"></rect><rect x="1366.1" y="102.3" width="13.0" height="1.3" fill="#ff9090"></rect><rect x="1379.1" y="102.3" width="1.0" height="1.3" fill="#c9e1ff"></rect><rect x="1380.1" y="102.3" width="7.0" height="1.3" fill="#c9e1ff"></rect><rect x="1387.1" y="102.3" width="2.0" height="1.3" fill="#ffd700"></rect><rect x="1355.1" y="108.3" width="3.0" height="1.3" fill="#eeaaf6"></rect><rect x="1359.1" y="108.3" width="4.0" height="1.3" fill="#c9e1ff"></rect><rect x="1363.1" y="108.3" width="2.0" height="1.3" fill="#ffd700"></rect><rect x="1365.1" y="108.3" width="1.0" height="1.3" fill="#c9e1ff"></rect><rect x="1359.1" y="110.3" width="1.0" height="1.3" fill="#6a79ae"></rect><rect x="1361.1" y="110.3" width="3.0" height="1.3" fill="#6a79ae"></rect><rect x="1365.1" y="110.3" width="3.0" height="1.3" fill="#6a79ae"></rect><rect x="1369.1" y="110.3" width="5.0" height="1.3" fill="#6a79ae"></rect><rect x="1359.1" y="112.3" width="5.0" height="1.3" fill="#ff9090"></rect><rect x="1365.1" y="112.3" width="1.0" height="1.3" fill="#7fe8f2"></rect><rect x="1367.1" y="112.3" width="9.0" height="1.3" fill="#c9e1ff"></rect><rect x="1376.1" y="112.3" width="2.0" height="1.3" fill="#ffd700"></rect><rect x="1359.1" y="116.3" width="1.0" height="1.3" fill="#6a79ae"></rect><rect x="1361.1" y="116.3" width="3.0" height="1.3" fill="#6a79ae"></rect><rect x="1365.1" y="116.3" width="4.0" height="1.3" fill="#6a79ae"></rect><rect x="1370.1" y="116.3" width="7.0" height="1.3" fill="#6a79ae"></rect><rect x="1359.1" y="118.3" width="12.0" height="1.3" fill="#ff9090"></rect><rect x="1372.1" y="118.3" width="1.0" height="1.3" fill="#7fe8f2"></rect><rect x="1374.1" y="118.3" width="5.0" height="1.3" fill="#c9e1ff"></rect><rect x="1379.1" y="118.3" width="1.0" height="1.3" fill="#ffd700"></rect><rect x="1380.1" y="118.3" width="6.0" height="1.3" fill="#c3e88d"></rect><rect x="1387.1" y="118.3" width="4.0" height="1.3" fill="#c3e88d"></rect><rect x="1392.1" y="118.3" width="8.0" height="1.3" fill="#c3e88d"></rect><rect x="1401.1" y="118.3" width="1.0" height="1.3" fill="#c3e88d"></rect><rect x="1402.1" y="118.3" width="1.0" height="1.3" fill="#ffd700"></rect><rect x="1359.1" y="122.3" width="1.0" height="1.3" fill="#6a79ae"></rect><rect x="1361.1" y="122.3" width="4.0" height="1.3" fill="#6a79ae"></rect><rect x="1366.1" y="122.3" width="3.0" height="1.3" fill="#6a79ae"></rect><rect x="1370.1" y="122.3" width="7.0" height="1.3" fill="#6a79ae"></rect><rect x="1378.1" y="122.3" width="5.0" height="1.3" fill="#6a79ae"></rect><rect x="1359.1" y="124.3" width="13.0" height="1.3" fill="#ff9090"></rect><rect x="1373.1" y="124.3" width="1.0" height="1.3" fill="#7fe8f2"></rect><rect x="1375.1" y="124.3" width="8.0" height="1.3" fill="#c9e1ff"></rect><rect x="1383.1" y="124.3" width="1.0" height="1.3" fill="#ffd700"></rect><rect x="1384.1" y="124.3" width="1.0" height="1.3" fill="#da70d6"></rect><rect x="1385.1" y="124.3" width="10.0" height="1.3" fill="#c3e88d"></rect><rect x="1395.1" y="124.3" width="1.0" height="1.3" fill="#c9e1ff"></rect><rect x="1397.1" y="124.3" width="1.0" height="1.3" fill="#179fff"></rect><rect x="1398.1" y="124.3" width="12.0" height="1.3" fill="#ff9090"></rect><rect x="1410.1" y="124.3" width="1.0" height="1.3" fill="#179fff"></rect><rect x="1411.1" y="124.3" width="1.0" height="1.3" fill="#da70d6"></rect><rect x="1412.1" y="124.3" width="1.0" height="1.3" fill="#ffd700"></rect><rect x="1359.1" y="128.3" width="1.0" height="1.3" fill="#6a79ae"></rect><rect x="1361.1" y="128.3" width="3.0" height="1.3" fill="#6a79ae"></rect><rect x="1365.1" y="128.3" width="3.0" height="1.3" fill="#6a79ae"></rect><rect x="1369.1" y="128.3" width="5.0" height="1.3" fill="#6a79ae"></rect><rect x="1359.1" y="130.3" width="3.0" height="1.3" fill="#eeaaf6"></rect><rect x="1363.1" y="130.3" width="5.0" height="1.3" fill="#ff9090"></rect><rect x="1369.1" y="130.3" width="2.0" height="1.3" fill="#eeaaf6"></rect><rect x="1372.1" y="130.3" width="5.0" height="1.3" fill="#ff9090"></rect><rect x="1377.1" y="130.3" width="1.0" height="1.3" fill="#c9e1ff"></rect><rect x="1378.1" y="130.3" width="6.0" height="1.3" fill="#c9e1ff"></rect><rect x="1384.1" y="130.3" width="1.0" height="1.3" fill="#ffd700"></rect><rect x="1385.1" y="130.3" width="13.0" height="1.3" fill="#ff9090"></rect><rect x="1398.1" y="130.3" width="1.0" height="1.3" fill="#ffd700"></rect><rect x="1399.1" y="130.3" width="1.0" height="1.3" fill="#c9e1ff"></rect><rect x="1363.1" y="132.3" width="1.0" height="1.3" fill="#6a79ae"></rect><rect x="1365.1" y="132.3" width="4.0" height="1.3" fill="#6a79ae"></rect><rect x="1370.1" y="132.3" width="4.0" height="1.3" fill="#6a79ae"></rect><rect x="1375.1" y="132.3" width="4.0" height="1.3" fill="#6a79ae"></rect><rect x="1380.1" y="132.3" width="3.0" height="1.3" fill="#6a79ae"></rect><rect x="1384.1" y="132.3" width="2.0" height="1.3" fill="#6a79ae"></rect><rect x="1387.1" y="132.3" width="6.0" height="1.3" fill="#6a79ae"></rect><rect x="1394.1" y="132.3" width="3.0" height="1.3" fill="#6a79ae"></rect><rect x="1398.1" y="132.3" width="5.0" height="1.3" fill="#6a79ae"></rect><rect x="1404.1" y="132.3" width="3.0" height="1.3" fill="#6a79ae"></rect><rect x="1408.1" y="132.3" width="8.0" height="1.3" fill="#6a79ae"></rect><rect x="1363.1" y="134.3" width="3.0" height="1.3" fill="#eeaaf6"></rect><rect x="1367.1" y="134.3" width="3.0" height="1.3" fill="#ff9090"></rect><rect x="1371.1" y="134.3" width="2.0" height="1.3" fill="#eeaaf6"></rect><rect x="1374.1" y="134.3" width="5.0" height="1.3" fill="#ff9090"></rect><rect x="1379.1" y="134.3" width="1.0" height="1.3" fill="#c9e1ff"></rect><rect x="1367.1" y="136.3" width="5.0" height="1.3" fill="#c9e1ff"></rect><rect x="1372.1" y="136.3" width="1.0" height="1.3" fill="#ffd700"></rect><rect x="1373.1" y="136.3" width="1.0" height="1.3" fill="#c3e88d"></rect><rect x="1374.1" y="136.3" width="2.0" height="1.3" fill="#ffb47a"></rect><rect x="1376.1" y="136.3" width="43.0" height="1.3" fill="#c3e88d"></rect><rect x="1419.1" y="136.3" width="2.0" height="1.3" fill="#ffb47a"></rect><rect x="1421.1" y="136.3" width="1.0" height="1.3" fill="#c3e88d"></rect><rect x="1422.1" y="136.3" width="1.0" height="1.3" fill="#ffd700"></rect><rect x="1367.1" y="138.3" width="5.0" height="1.3" fill="#c9e1ff"></rect><rect x="1372.1" y="138.3" width="1.0" height="1.3" fill="#ffd700"></rect><rect x="1373.1" y="138.3" width="3.0" height="1.3" fill="#ff9090"></rect><rect x="1377.1" y="138.3" width="1.0" height="1.3" fill="#7fe8f2"></rect><rect x="1379.1" y="138.3" width="3.0" height="1.3" fill="#c3e88d"></rect><rect x="1382.1" y="138.3" width="1.0" height="1.3" fill="#ffd700"></rect><rect x="1367.1" y="140.3" width="5.0" height="1.3" fill="#c9e1ff"></rect><rect x="1372.1" y="140.3" width="1.0" height="1.3" fill="#ffd700"></rect><rect x="1373.1" y="140.3" width="22.0" height="1.3" fill="#c3e88d"></rect><rect x="1395.1" y="140.3" width="2.0" height="1.3" fill="#ffb47a"></rect><rect x="1397.1" y="140.3" width="1.0" height="1.3" fill="#c3e88d"></rect><rect x="1398.1" y="140.3" width="1.0" height="1.3" fill="#ffd700"></rect><rect x="1367.1" y="142.3" width="5.0" height="1.3" fill="#c9e1ff"></rect><rect x="1372.1" y="142.3" width="1.0" height="1.3" fill="#ffd700"></rect><rect x="1373.1" y="142.3" width="5.0" height="1.3" fill="#ff9090"></rect><rect x="1378.1" y="142.3" width="1.0" height="1.3" fill="#da70d6"></rect><rect x="1379.1" y="142.3" width="3.0" height="1.3" fill="#ff9090"></rect><rect x="1382.1" y="142.3" width="1.0" height="1.3" fill="#da70d6"></rect><rect x="1383.1" y="142.3" width="1.0" height="1.3" fill="#da70d6"></rect><rect x="1384.1" y="142.3" width="10.0" height="1.3" fill="#c3e88d"></rect><rect x="1394.1" y="142.3" width="1.0" height="1.3" fill="#da70d6"></rect><rect x="1395.1" y="142.3" width="1.0" height="1.3" fill="#da70d6"></rect><rect x="1396.1" y="142.3" width="1.0" height="1.3" fill="#7fe8f2"></rect><rect x="1397.1" y="142.3" width="1.0" height="1.3" fill="#ffb47a"></rect><rect x="1398.1" y="142.3" width="1.0" height="1.3" fill="#da70d6"></rect><rect x="1399.1" y="142.3" width="1.0" height="1.3" fill="#c9e1ff"></rect><rect x="1400.1" y="142.3" width="7.0" height="1.3" fill="#c9e1ff"></rect><rect x="1407.1" y="142.3" width="1.0" height="1.3" fill="#ffd700"></rect></svg>
<div class="abs" style="left:1466px;top:68px;width:16px;height:47px;border-left:1px solid #10305a;border-top:1px solid #10305a"></div>
<div class="abs" style="left:1466px;top:115px;width:16px;height:430px;background:#2c3e5c"></div>
<div class="abs" style="left:1466px;top:472px;width:16px;height:2px;background:#a9b3c2"></div>
</div>

<!-- ================= PANEL ================= -->
<div id="panel">
<!--PANEL-->
<span class="t" style="left: 24.6px; top: 14.5px; font-size: 13.8px; color: rgb(142, 155, 176); letter-spacing: -0.659px;">PROBLEMS</span>
<span class="t" style="left: 125.3px; top: 14.5px; font-size: 13.8px; color: rgb(142, 155, 176); letter-spacing: -0.386px;">OUTPUT</span>
<span class="t" style="left: 209.2px; top: 14.5px; font-size: 13.8px; color: rgb(142, 155, 176); letter-spacing: -0.56px;">DEBUG CONSOLE</span>
<span class="t" style="left: 351.8px; top: 14.5px; font-size: 13.8px; color: rgb(242, 244, 247); letter-spacing: -0.446px;">TERMINAL</span>
<span class="t" style="left: 447.4px; top: 14.5px; font-size: 13.8px; color: rgb(142, 155, 176); letter-spacing: -0.676px;">PORTS</span>
<div class="abs" style="left:348.8px;top:33.2px;width:72px;height:1px;background:#f2f4f7"></div>
<span class="t mono" style="left:24.6px;top:49.6px;font-size:13.250px;letter-spacing:.030px;color:#e4e9f0;font-weight:bold">─── Fluidcast Terminal ───</span>
<span class="t mono" style="left:24.6px;top:66.7px;font-size:13.250px;letter-spacing:.030px;color:#63738e">Tip: Use a separate terminal to run your own commands</span>
<span class="t mono" style="left:24.6px;top:100.8px;font-size:13.250px;letter-spacing:.030px;color:#f2f4f7"><span style="color:#c3e88d">$</span> <b>uv run python src/test_setup.py</b></span>
<span class="t mono" style="left:24.6px;top:117.9px;font-size:13.250px;letter-spacing:.030px;color:#e4e9f0">Hi there! How can I help you today?</span>
<div class="abs" style="left:24.4px;top:149.2px;width:8px;height:16px;border:1px solid #e4e9f0"></div>
<svg class="abs" style="left:1321.5px;top:12.0px" width="16" height="16" viewBox="0 0 16 16" stroke="#c6c8cc" fill="none" stroke-width="1.300" stroke-linecap="round" stroke-linejoin="round"><path d="M8 .8v14.400M.8 8h14.400"></path></svg>
<svg class="abs" style="left:1344.3px;top:17.0px" width="10" height="7" viewBox="0 0 10 7" stroke="#c6c8cc" fill="none" stroke-width="1.300" stroke-linecap="round" stroke-linejoin="round"><path d="M1 1.200l4 4.300 4-4.300"></path></svg>
<svg class="abs" style="left:1370.0px;top:18.3px" width="14" height="4" viewBox="0 0 14 4" fill="#c6c8cc"><circle cx="1.600" cy="2" r="1.300"></circle><circle cx="7" cy="2" r="1.300"></circle><circle cx="12.400" cy="2" r="1.300"></circle></svg>
<div class="abs" style="left:1400.0px;top:11.0px;width:1px;height:19px;background:#55627a"></div>
<svg class="abs" style="left:1416.2px;top:12.8px" width="15" height="15" viewBox="0 0 15 15" stroke="#c6c8cc" fill="none" stroke-width="1.300" stroke-linecap="round" stroke-linejoin="round"><path d="M.8 4.600V2.600A1.800 1.800 0 0 1 2.600.8h2M10.400.8h2a1.800 1.800 0 0 1 1.800 1.800v2M14.200 10.400v2a1.800 1.800 0 0 1-1.800 1.800h-2M4.600 14.200h-2A1.800 1.800 0 0 1 .8 12.400v-2"></path></svg>
<svg class="abs" style="left:1449.0px;top:14.3px" width="12" height="12" viewBox="0 0 12 12" stroke="#c6c8cc" fill="none" stroke-width="1.300" stroke-linecap="round" stroke-linejoin="round"><path d="M.8.8l10.400 10.400M11.200.8L.8 11.200"></path></svg>
<div class="abs" style="left:1338.0px;top:41.0px;width:1px;height:420px;background:#2b4162"></div>
<div class="abs" style="left:1322.0px;top:47.4px;width:16px;height:420px;border-left:1px solid #233a5c;border-top:1px solid #233a5c"></div>
<svg class="abs" style="left:1352.0px;top:45.5px" width="17" height="17" viewBox="0 0 17 17" fill="none" stroke="#c6c8cc" stroke-width="1.300" stroke-linecap="round" stroke-linejoin="round"><rect x=".8" y=".8" width="15.400" height="15.400" rx="2.600"></rect><path d="M3.600 5.200l3.600 3.400-3.600 3.400M8.600 12.400h4.800"></path></svg>
<span class="t" style="left: 1375px; top: 46.6px; font-size: 15.6px; color: rgb(198, 200, 204); letter-spacing: 0.361px;">opencode</span>
<div class="abs" style="left:1339.0px;top:67.0px;width:143px;height:27px;background:#607494;border:1px solid #9cc2f2"></div>
<svg class="abs" style="left:1352.0px;top:71.5px" width="17" height="17" viewBox="0 0 17 17" fill="none" stroke="#f2f4f7" stroke-width="1.300" stroke-linecap="round" stroke-linejoin="round"><rect x=".8" y=".8" width="15.400" height="15.400" rx="2.600"></rect><path d="M3.600 5.200l3.600 3.400-3.600 3.400M8.600 12.400h4.800"></path></svg>
<span class="t" style="left: 1375px; top: 72.8px; font-size: 15.6px; color: rgb(255, 255, 255); letter-spacing: -0.125px;">Fluid...</span>
<svg class="abs" style="left:1425.8px;top:71.8px" width="17" height="17" viewBox="0 0 17 17" fill="none" stroke="#f2f4f7" stroke-width="1.300"><rect x=".8" y=".8" width="15.400" height="15.400" rx="2.600"></rect><path d="M8.500.8v15.400"></path></svg>
<svg class="abs" style="left:1450.0px;top:70.6px" width="16" height="18" viewBox="0 0 16 18" fill="none" stroke="#f2f4f7" stroke-width="1.300" stroke-linecap="round" stroke-linejoin="round"><path d="M.8 3.600h14.400M5.600 3.400V2.200A1.400 1.400 0 0 1 7 .8h2a1.400 1.400 0 0 1 1.400 1.400v1.200M2.400 3.800l.9 11.600a2 2 0 0 0 2 1.800h5.400a2 2 0 0 0 2-1.800l.9-11.600M6.400 7v7M9.600 7v7"></path></svg>
</div>

<!-- ================= AUX BAR ================= -->
<div id="aux">
<!--AUX-->
<span class="t" style="left: 24.4px; top: 14.6px; font-size: 13.2px; color: rgb(228, 233, 240); letter-spacing: -0.104px;">FLUIDCAST PLAYER</span>
<div class="abs" style="left:22.0px;top:33.8px;width:131px;height:1.200px;background:#e4e9f0"></div>
<svg class="abs" style="left:583.3px;top:13.0px" width="15" height="15" viewBox="0 0 15 15" stroke="#c6c8cc" fill="none" stroke-width="1.300" stroke-linecap="round" stroke-linejoin="round"><path d="M.8 4.600V2.600A1.800 1.800 0 0 1 2.600.8h2M10.400.8h2a1.800 1.800 0 0 1 1.800 1.800v2M14.200 10.400v2a1.800 1.800 0 0 1-1.800 1.800h-2M4.600 14.200h-2A1.800 1.800 0 0 1 .8 12.400v-2"></path></svg>
<svg class="abs" style="left:616.3px;top:14.7px" width="12" height="12" viewBox="0 0 12 12" stroke="#c6c8cc" fill="none" stroke-width="1.300" stroke-linecap="round" stroke-linejoin="round"><path d="M.8.8l10.400 10.400M11.200.8L.8 11.200"></path></svg>
<div class="abs" style="left:0;top:42.0px;width:649px;height:67px;background:#08203f;border:1px solid #14294a;border-left:none"></div>
<span class="t" style="left: 20.5px; top: 55.8px; font-size: 13.4px; font-weight: bold; color: rgb(86, 99, 120); letter-spacing: 0.239px;">BUILDING AUTONOMOUS AGENTS: FROM CHAINS TO LOOPS</span>
<span class="t" style="left: 20.5px; top: 77.3px; font-size: 16.2px; font-weight: bold; color: rgb(255, 255, 255); letter-spacing: -0.456px;">The Loop: Breaking Linearity</span>
<div class="abs" style="left:251.0px;top:73.2px;width:71px;height:24.500px;border-radius:13px;background:#0d4458;border:1px solid #17706f"></div>
<span class="t" style="left: 262.2px; top: 78.4px; font-size: 13.4px; color: rgb(45, 212, 191); letter-spacing: 0.028px;">Socratic</span>
<span class="t" style="left: 500px; top: 68.4px; font-size: 14.8px; -webkit-text-stroke: 0.4px; color: rgb(45, 212, 191); letter-spacing: -0.445px;">0%</span>
<svg class="abs" style="left:604.8px;top:68.3px" width="14.500" height="14.500" viewBox="0 0 24 24" fill="none" stroke="#8490a1" stroke-width="2.100" stroke-linejoin="round"><path d="M10.300 1.800h3.400l.6 3 1.900.8 2.600-1.700 2.400 2.400-1.700 2.600.8 1.900 3 .6v3.400l-3 .6-.8 1.900 1.700 2.600-2.400 2.400-2.600-1.700-1.900.8-.6 3h-3.400l-.6-3-1.900-.8-2.600 1.700-2.400-2.400 1.700-2.600-.8-1.900-3-.6v-3.400l3-.6.8-1.900-1.700-2.600 2.400-2.400 2.600 1.700 1.900-.8z"></path><circle cx="12" cy="12" r="3"></circle></svg>
<svg class="abs" style="left:14.1px;top:114.6px" width="20.500" height="20.500" viewBox="0 0 24 24" fill="none" stroke="#2dd4bf" stroke-width="1.900" stroke-linecap="round" stroke-linejoin="round"><path d="M12 8V4H8"></path><rect width="16" height="12" x="4" y="8" rx="2"></rect><path d="M2 14h2M20 14h2M15 13v2M9 13v2"></path></svg>
<span class="t" style="left: 43.6px; top: 115.1px; font-size: 17px; font-weight: bold; color: rgb(45, 212, 191); letter-spacing: -0.07px;">Sarah</span>
<span class="t m" style="left: 43.1px; top: 146.1px; letter-spacing: 0.162px;">Now that our config is ready, let's make sure it actually works. I'm creating a</span>
<span class="t m" style="left: 43.1px; top: 173.1px; letter-spacing: 0.278px;">small test script.</span>
<svg class="abs" style="left:14.1px;top:217.6px" width="20.500" height="20.500" viewBox="0 0 24 24" fill="none" stroke="#a78bfa" stroke-width="1.900" stroke-linecap="round" stroke-linejoin="round"><path d="M12 8V4H8"></path><rect width="16" height="12" x="4" y="8" rx="2"></rect><path d="M2 14h2M20 14h2M15 13v2M9 13v2"></path></svg>
<span class="t" style="left: 43.6px; top: 218.1px; font-size: 17px; font-weight: bold; color: rgb(167, 139, 250); letter-spacing: -0.105px;">Alex</span>
<span class="t m" style="left: 43.1px; top: 248.9px; letter-spacing: 0.209px;">Wait, 'gpt-5-nano'? Is that a real model?</span>
<svg class="abs" style="left:14.1px;top:292.6px" width="20.500" height="20.500" viewBox="0 0 24 24" fill="none" stroke="#2dd4bf" stroke-width="1.900" stroke-linecap="round" stroke-linejoin="round"><path d="M12 8V4H8"></path><rect width="16" height="12" x="4" y="8" rx="2"></rect><path d="M2 14h2M20 14h2M15 13v2M9 13v2"></path></svg>
<span class="t" style="left: 43.6px; top: 293.1px; font-size: 17px; font-weight: bold; color: rgb(45, 212, 191); letter-spacing: -0.07px;">Sarah</span>
<span class="t m" style="left: 43.1px; top: 323.9px; letter-spacing: 0.24px;">In our world it is! It's a perfect, lightweight model for testing our loops</span>
<span class="t m" style="left: 43.1px; top: 350.9px; letter-spacing: 0.235px;">without burning through credits. Let's take a look at the test code.</span>
<svg class="abs" style="left:14.1px;top:469.9px" width="20.500" height="20.500" viewBox="0 0 24 24" fill="none" stroke="#2dd4bf" stroke-width="1.900" stroke-linecap="round" stroke-linejoin="round"><path d="M12 8V4H8"></path><rect width="16" height="12" x="4" y="8" rx="2"></rect><path d="M2 14h2M20 14h2M15 13v2M9 13v2"></path></svg>
<span class="t" style="left: 43.6px; top: 470.4px; font-size: 17px; font-weight: bold; color: rgb(45, 212, 191); letter-spacing: -0.07px;">Sarah</span>
<span class="t m" style="left: 43.1px; top: 500.4px; letter-spacing: 0.163px;">I'm going to run this script. If we see a friendly response in the terminal,</span>
<span class="t m" style="left: 43.1px; top: 527.5px; letter-spacing: 0.102px;">we'll know our connection to OpenRouter is solid. Ready to see if it works?</span>
<svg class="abs" style="left:14.1px;top:646.0px" width="20.500" height="20.500" viewBox="0 0 24 24" fill="none" stroke="#2dd4bf" stroke-width="1.900" stroke-linecap="round" stroke-linejoin="round"><path d="M12 8V4H8"></path><rect width="16" height="12" x="4" y="8" rx="2"></rect><path d="M2 14h2M20 14h2M15 13v2M9 13v2"></path></svg>
<span class="t" style="left: 43.6px; top: 646.5px; font-size: 17px; font-weight: bold; color: rgb(45, 212, 191); letter-spacing: -0.07px;">Sarah</span>
<span class="t m" style="left: 43.1px; top: 677.2px; letter-spacing: 0.083px;">Oh! It looks like we hit a snag. The terminal is telling us</span>
<span class="t m" style="left: 43.1px; top: 704.2px; letter-spacing: 0.262px;">`ModuleNotFoundError: No module named 'dotenv'`.</span>
<svg class="abs" style="left:14.1px;top:748.8px" width="20.500" height="20.500" viewBox="0 0 24 24" fill="none" stroke="#a78bfa" stroke-width="1.900" stroke-linecap="round" stroke-linejoin="round"><path d="M12 8V4H8"></path><rect width="16" height="12" x="4" y="8" rx="2"></rect><path d="M2 14h2M20 14h2M15 13v2M9 13v2"></path></svg>
<span class="t" style="left: 43.6px; top: 749.3px; font-size: 17px; font-weight: bold; color: rgb(167, 139, 250); letter-spacing: -0.105px;">Alex</span>
<span class="t m" style="left: 43.1px; top: 779.3px; letter-spacing: 0.223px;">Wait, didn't we just install `python-dotenv`? I saw the success message!</span>
<svg class="abs" style="left:14.1px;top:823.8px" width="20.500" height="20.500" viewBox="0 0 24 24" fill="none" stroke="#2dd4bf" stroke-width="1.900" stroke-linecap="round" stroke-linejoin="round"><path d="M12 8V4H8"></path><rect width="16" height="12" x="4" y="8" rx="2"></rect><path d="M2 14h2M20 14h2M15 13v2M9 13v2"></path></svg>
<span class="t" style="left: 43.6px; top: 824.3px; font-size: 17px; font-weight: bold; color: rgb(45, 212, 191); letter-spacing: -0.07px;">Sarah</span>
<span class="t m" style="left: 43.1px; top: 855px; letter-spacing: 0.128px;">You're right, Alex. We did. This happens sometimes when the Python</span>
<span class="t m" style="left: 43.1px; top: 882.1px; letter-spacing: 0.247px;">environment used by the terminal doesn't match where `uv` installed the</span>
<span class="t m" style="left: 43.1px; top: 909.2px; letter-spacing: 0.116px;">packages.</span>
<svg class="abs" style="left:14.1px;top:953.8px" width="20.500" height="20.500" viewBox="0 0 24 24" fill="none" stroke="#2dd4bf" stroke-width="1.900" stroke-linecap="round" stroke-linejoin="round"><path d="M12 8V4H8"></path><rect width="16" height="12" x="4" y="8" rx="2"></rect><path d="M2 14h2M20 14h2M15 13v2M9 13v2"></path></svg>
<span class="t" style="left: 43.6px; top: 954.3px; font-size: 17px; font-weight: bold; color: rgb(45, 212, 191); letter-spacing: -0.07px;">Sarah</span>
<span class="t m" style="left: 43.1px; top: 984.5px; letter-spacing: 0.233px;">Since we're using `uv`, we should run our scripts through it to ensure it</span>
<span class="t m" style="left: 43.1px; top: 1011.9px; letter-spacing: 0.278px;">uses the correct virtual environment. Let's try running it with `uv run`</span>
<span class="t m" style="left: 43.1px; top: 1039.2px; letter-spacing: 0.2px;">instead.</span>
<div class="abs" style="left:14.0px;top:1153.8px;width:4px;height:84px;background:#2dd4bf"></div>
<svg class="abs" style="left:28.7px;top:1156.1px" width="20.500" height="20.500" viewBox="0 0 24 24" fill="none" stroke="#2dd4bf" stroke-width="1.900" stroke-linecap="round" stroke-linejoin="round"><path d="M12 8V4H8"></path><rect width="16" height="12" x="4" y="8" rx="2"></rect><path d="M2 14h2M20 14h2M15 13v2M9 13v2"></path></svg>
<span class="t" style="left: 57.8px; top: 1156.6px; font-size: 17px; font-weight: bold; color: rgb(45, 212, 191); letter-spacing: -0.07px;">Sarah</span>
<span class="t m" style="left: 57.3px; top: 1187.8px; letter-spacing: 0.107px;">There we go! 'Hi there! How can I help you today?'—that's exactly what we</span>
<span class="t m" style="left: 57.3px; top: 1215.3px; letter-spacing: 0.136px;">wanted to see.</span>
<div class="abs" style="left:14.0px;top:393.2px;width:621px;height:58.5px;background:#08203f;border:1px solid #152c4e;border-radius:5px;box-shadow:0 2px 5px rgba(0,4,16,.35)"></div>
<svg class="abs" style="left:31.0px;top:409.0px" width="20" height="15" viewBox="0 0 20 15" fill="none" stroke="#2dd4bf" stroke-width="1.700" stroke-linecap="round" stroke-linejoin="round"><path d="M1 7.500C3 3.200 6.200 1 10 1s7 2.200 9 6.500c-2 4.300-5.200 6.500-9 6.500s-7-2.200-9-6.500z"></path><circle cx="10" cy="7.500" r="2.700"></circle></svg>
<span class="t mono" style="left:66.0px;top:405.2px;font-size:14.400px;letter-spacing:.020px;color:#c9d0dc">focus</span>
<span class="t mono" style="left:66.0px;top:424.1px;font-size:14.400px;letter-spacing:.020px;color:#8792a6">Highlight the chat completion call and model name in src/test_…</span>
<div class="abs" style="left:14.0px;top:569.2px;width:621px;height:59.8px;background:#08203f;border:1px solid #152c4e;border-radius:5px;box-shadow:0 2px 5px rgba(0,4,16,.35)"></div>
<svg class="abs" style="left:31.8px;top:585.2px" width="18" height="15" viewBox="0 0 18 15" fill="none" stroke="#a78bfa" stroke-width="1.700" stroke-linecap="round" stroke-linejoin="round"><path d="M1 1l6.200 5.800L1 12.600M9.600 13.800h7.400"></path></svg>
<span class="t mono" style="left:66.0px;top:582.4px;font-size:14.400px;letter-spacing:.020px;color:#c9d0dc">terminal</span>
<span class="t mono" style="left:66.0px;top:601.3px;font-size:14.400px;letter-spacing:.020px;color:#8792a6">python src/test_setup.py</span>
<div class="abs" style="left:14.0px;top:1080.3px;width:621px;height:59.8px;background:#08203f;border:1px solid #152c4e;border-radius:5px;box-shadow:0 2px 5px rgba(0,4,16,.35)"></div>
<svg class="abs" style="left:31.8px;top:1096.3px" width="18" height="15" viewBox="0 0 18 15" fill="none" stroke="#a78bfa" stroke-width="1.700" stroke-linecap="round" stroke-linejoin="round"><path d="M1 1l6.200 5.800L1 12.600M9.600 13.800h7.400"></path></svg>
<span class="t mono" style="left:66.0px;top:1093.5px;font-size:14.400px;letter-spacing:.020px;color:#c9d0dc">terminal</span>
<span class="t mono" style="left:66.0px;top:1112.4px;font-size:14.400px;letter-spacing:.020px;color:#8792a6">uv run python src/test_setup.py</span>
<div class="abs" style="left:144.2px;top:1260.4px;width:361.500px;height:97.200px;background:#08203f;border:1px solid #142b4d;border-radius:15px"></div>
<svg class="abs" style="left:172.8px;top:1300.3px" width="19.300" height="16.500" viewBox="0 0 21 18" stroke="#c1c9d6" fill="none" stroke-width="1.700" stroke-linecap="round" stroke-linejoin="round"><path d="M1.200 1v16M19.600 2.200v13.600a.800.800 0 0 1-1.300.600L6.500 9.600a.800.800 0 0 1 0-1.200L18.300 1.600a.800.800 0 0 1 1.300.600z"></path></svg>
<div class="abs" style="left:221.2px;top:1279.6px;width:57.600px;height:57.600px;border-radius:50%;background:#115c96;box-shadow:0 5px 12px rgba(0,5,18,.55)"></div>
<svg class="abs" style="left:242.6px;top:1296.3px" width="22.300" height="24.200" viewBox="0 0 24 26" fill="none" stroke="#ffffff" stroke-width="2.800" stroke-linecap="round" stroke-linejoin="round"><path d="M1.800 3v20a1.200 1.200 0 0 0 1.800 1L21 14a1.200 1.200 0 0 0 0-2L3.600 2a1.200 1.200 0 0 0-1.800 1z"></path></svg>
<svg class="abs" style="left:307.3px;top:1300.3px" width="19.300" height="16.500" viewBox="0 0 21 18" stroke="#c1c9d6" fill="none" stroke-width="1.700" stroke-linecap="round" stroke-linejoin="round"><path d="M19.800 1v16M1.400 2.200v13.600a.800.800 0 0 0 1.300.600l11.800-6.800a.800.800 0 0 0 0-1.200L2.700 1.600a.800.800 0 0 0-1.300.600z"></path></svg>
<div class="abs" style="left:360.4px;top:1289.0px;width:1.500px;height:39px;background:#1c3558"></div>
<div class="abs" style="left:386.2px;top:1287.0px;width:99px;height:43px;border-radius:22px;background:#162a4b;border:1px solid #3a4c6a"></div>
<svg class="abs" style="left:408.8px;top:1298.8px" width="14" height="19" viewBox="0 0 14 19" fill="none" stroke="#ffffff" stroke-width="1.700" stroke-linecap="round" stroke-linejoin="round"><rect x="4.200" y="1" width="5.600" height="10.400" rx="2.800"></rect><path d="M1 8.600a6 6 0 0 0 12 0M7 14.600V18"></path></svg>
<span class="t" style="left: 432.4px; top: 1300px; font-size: 16.2px; font-weight: bold; color: rgb(255, 255, 255); letter-spacing: -0.195px;">Join</span>
</div>

<!-- ================= STATUS BAR ================= -->
<div id="status">
<!--STATUS-->
<svg class="abs" style="left:12.500px;top:4px" width="14" height="17" viewBox="0 0 14 17" fill="none" stroke="#f2f4f7" stroke-width="1.300" stroke-linecap="round" stroke-linejoin="round"><path d="M.5 5.900l5.400 4.800L.5 15.500M12.200.9L7 5.700l5.200 4.800"></path></svg>
<svg class="abs" style="left:50px;top:4px" width="18" height="19" viewBox="0 0 18 19" fill="none" stroke="#f2f4f7" stroke-width="1.300" stroke-linecap="round" stroke-linejoin="round"><circle cx="3.600" cy="3" r="2.100"></circle><circle cx="3.600" cy="16" r="2.100"></circle><path d="M3.600 5.100v8.800M3.600 11.600c4.200-.4 6.400-1.600 7-4.400"></path><circle cx="12.600" cy="13.400" r="4.400" fill="#f2f4f7" stroke="none"></circle><path d="M12.600 10.800v5.200M10.300 12.100l4.600 2.600M14.900 12.100l-4.600 2.600" stroke="#011222" stroke-width="1"></path></svg>
<span class="t" style="left: 71.5px; top: 5.7px; font-size: 14.4px; color: rgb(242, 244, 247); letter-spacing: 0.381px;">main*</span>
<svg class="abs" style="left:119px;top:5.500px" width="19" height="16" viewBox="0 0 19 16" fill="none" stroke="#f2f4f7" stroke-width="1.300" stroke-linecap="round" stroke-linejoin="round"><path d="M8.600 11.800H4.600a3.600 3.600 0 0 1-.5-7.200 5 5 0 0 1 9.700 1.200"></path><circle cx="13.400" cy="10.800" r="4.600" fill="#f2f4f7" stroke="none"></circle><path d="M13.400 13.400V8.400M11.300 10.300l2.100-2.100 2.100 2.100" stroke="#011222" stroke-width="1.100"></path></svg>
<span class="t" style="left: 156.2px; top: 5.7px; font-size: 14.4px; color: rgb(242, 244, 247); letter-spacing: 0.242px;">Maverick: Ready</span>
<svg class="abs" style="left:287.500px;top:5px" width="17" height="17" viewBox="0 0 17 17" fill="none" stroke="#f2f4f7" stroke-width="1.300" stroke-linecap="round" stroke-linejoin="round"><circle cx="8.500" cy="8.500" r="7.600"></circle><path d="M5.700 5.700l5.600 5.600M11.300 5.700l-5.600 5.600"></path></svg>
<span class="t" style="left: 310.4px; top: 5.7px; font-size: 14.4px; color: rgb(242, 244, 247); letter-spacing: -0.616px;">0</span>
<svg class="abs" style="left:324px;top:5px" width="18" height="16" viewBox="0 0 18 16" fill="none" stroke="#f2f4f7" stroke-width="1.300" stroke-linecap="round" stroke-linejoin="round"><path d="M9 1.200L1 14.800h16z"></path><path d="M9 6v4.600M9 12.400v.300"></path></svg>
<span class="t" style="left: 347px; top: 5.7px; font-size: 14.4px; color: rgb(242, 244, 247); letter-spacing: -0.616px;">0</span>
<span class="t" style="left: 375.2px; top: 5.7px; font-size: 14.4px; color: rgb(242, 244, 247); letter-spacing: 0.575px;">-- NORMAL --</span>
<div class="abs" style="left:1681px;top:0;width:229px;height:26px;background:#020a15"></div>
<svg class="abs" style="left:1691px;top:3.800px" width="17" height="17" viewBox="0 0 17 17" fill="none" stroke="#f2f4f7" stroke-width="1.300" stroke-linecap="round" stroke-linejoin="round"><circle cx="6.800" cy="6.800" r="5.800"></circle><path d="M11 11l5 5M4.200 6.800h5.200M6.800 4.200v5.200"></path></svg>
<span class="t" style="left: 1729.2px; top: 5.7px; font-size: 14.4px; color: rgb(242, 244, 247); letter-spacing: 0.292px;">Screen Reader Optimized</span>
<span class="t" style="left: 1921.1px; top: 5.7px; font-size: 14.4px; color: rgb(242, 244, 247); letter-spacing: 0.415px;">Ln 38, Col 55</span>
<span class="t" style="left: 2032px; top: 5.7px; font-size: 14.4px; color: rgb(242, 244, 247); letter-spacing: 0.244px;">Spaces: 4</span>
<span class="t" style="left: 2118px; top: 5.7px; font-size: 14.4px; color: rgb(242, 244, 247); letter-spacing: 0.464px;">UTF-8</span>
<span class="t" style="left: 2181px; top: 5.7px; font-size: 14.4px; color: rgb(242, 244, 247); letter-spacing: -0.298px;">LF</span>
<span class="t" style="left: 2218.9px; top: 5.7px; font-size: 14.4px; color: rgb(242, 244, 247); letter-spacing: 0.625px;">{ }</span>
<span class="t" style="left: 2243.4px; top: 5.7px; font-size: 14.4px; color: rgb(242, 244, 247); letter-spacing: 0.398px;">Python</span>
<span class="t" style="left: 2310.4px; top: 5.7px; font-size: 14.4px; color: rgb(242, 244, 247); letter-spacing: 0.657px;">3.13.3 (test-uv)</span>
<svg class="abs" style="left:2438.800px;top:5px" width="17" height="17" viewBox="0 0 17 17" fill="none" stroke="#f2f4f7" stroke-width="1.300" stroke-linecap="round" stroke-linejoin="round"><circle cx="8.500" cy="8.500" r="7.600"></circle><path d="M3.400 13.600L13.600 3.400"></path></svg>
<span class="t" style="left: 2461.5px; top: 5.7px; font-size: 14.4px; color: rgb(242, 244, 247); letter-spacing: 0.389px;">Prettier</span>
<svg class="abs" style="left:2532.500px;top:4.500px" width="16" height="18" viewBox="0 0 16 18" fill="none" stroke="#f2f4f7" stroke-width="1.300" stroke-linecap="round" stroke-linejoin="round"><path d="M8 1.200a5 5 0 0 0-5 5v3.600L1.200 13.400h13.600L13 9.800V6.200a5 5 0 0 0-5-5zM6 14.400a2 2 0 0 0 4 0"></path></svg>
</div>

</body></html>
